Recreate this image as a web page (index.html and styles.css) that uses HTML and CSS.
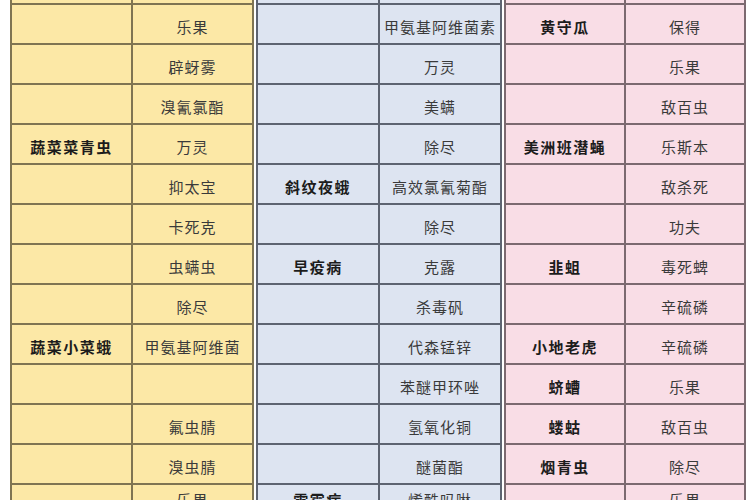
FILE: index.html
```html
<!DOCTYPE html>
<html lang="zh">
<head>
<meta charset="utf-8">
<link rel="stylesheet" href="styles.css">
</head>
<body>
<div class="wrap">
  <div class="tbl yellow">
    <div class="c k"></div><div class="c"></div>
    <div class="c k"></div><div class="c">乐果</div>
    <div class="c k"></div><div class="c">辟蚜雾</div>
    <div class="c k"></div><div class="c">溴氰氯酯</div>
    <div class="c k">蔬菜菜青虫</div><div class="c">万灵</div>
    <div class="c k"></div><div class="c">抑太宝</div>
    <div class="c k"></div><div class="c">卡死克</div>
    <div class="c k"></div><div class="c">虫螨虫</div>
    <div class="c k"></div><div class="c">除尽</div>
    <div class="c k">蔬菜小菜蛾</div><div class="c">甲氨基阿维菌</div>
    <div class="c k"></div><div class="c"></div>
    <div class="c k"></div><div class="c">氟虫腈</div>
    <div class="c k"></div><div class="c">溴虫腈</div>
    <div class="c k last"></div><div class="c last">乐果</div>
  </div>
  <div class="tbl blue">
    <div class="c k"></div><div class="c"></div>
    <div class="c k"></div><div class="c">甲氨基阿维菌素</div>
    <div class="c k"></div><div class="c">万灵</div>
    <div class="c k"></div><div class="c">美螨</div>
    <div class="c k"></div><div class="c">除尽</div>
    <div class="c k">斜纹夜蛾</div><div class="c">高效氯氰菊酯</div>
    <div class="c k"></div><div class="c">除尽</div>
    <div class="c k">早疫病</div><div class="c">克露</div>
    <div class="c k"></div><div class="c">杀毒矾</div>
    <div class="c k"></div><div class="c">代森锰锌</div>
    <div class="c k"></div><div class="c">苯醚甲环唑</div>
    <div class="c k"></div><div class="c">氢氧化铜</div>
    <div class="c k"></div><div class="c">醚菌酯</div>
    <div class="c k last">霜霉病</div><div class="c last">烯酰吗啉</div>
  </div>
  <div class="tbl pink">
    <div class="c k"></div><div class="c"></div>
    <div class="c k">黄守瓜</div><div class="c">保得</div>
    <div class="c k"></div><div class="c">乐果</div>
    <div class="c k"></div><div class="c">敌百虫</div>
    <div class="c k">美洲班潜蝇</div><div class="c">乐斯本</div>
    <div class="c k"></div><div class="c">敌杀死</div>
    <div class="c k"></div><div class="c">功夫</div>
    <div class="c k">韭蛆</div><div class="c">毒死蜱</div>
    <div class="c k"></div><div class="c">辛硫磷</div>
    <div class="c k">小地老虎</div><div class="c">辛硫磷</div>
    <div class="c k">蛴螬</div><div class="c">乐果</div>
    <div class="c k">蝼蛄</div><div class="c">敌百虫</div>
    <div class="c k">烟青虫</div><div class="c">除尽</div>
    <div class="c k last"></div><div class="c last">乐果</div>
  </div>
</div>
</body>
</html>
```
FILE: styles.css
```css
html, body {
  margin: 0;
  padding: 0;
  background: #ffffff;
  overflow: hidden;
  width: 750px;
  height: 500px;
}
.wrap {
  display: flex;
  gap: 2px;
  padding-left: 10px;
  margin-top: -37px;
  font-family: "Noto Sans CJK SC", "Noto Sans", sans-serif;
}
.tbl {
  display: grid;
  grid-template-columns: 1fr 1fr;
  grid-auto-rows: 38px;
  gap: 2px;
  padding: 2px;
}
.yellow { width: 244px; box-sizing: border-box; background: #7f7452; }
.blue { width: 246px; box-sizing: border-box; background: #5d6371; }
.pink { width: 242px; box-sizing: border-box; background: #7c6970; }
.yellow .c { background: #fce8a6; }
.blue .c { background: #dde4f1; }
.pink .c { background: #f9dde6; }
.c {
  display: flex;
  align-items: center;
  justify-content: center;
  padding-top: 5px;
  box-sizing: border-box;
  font-size: 15px;
  letter-spacing: 1px;
  color: #3a3a3a;
  white-space: nowrap;
  line-height: 1;
}
.c.k {
  font-weight: 700;
  color: #1c1c1c;
  letter-spacing: 1.5px;
}
.c.last {
  align-items: flex-start;
  padding-top: 7px;
}
```
